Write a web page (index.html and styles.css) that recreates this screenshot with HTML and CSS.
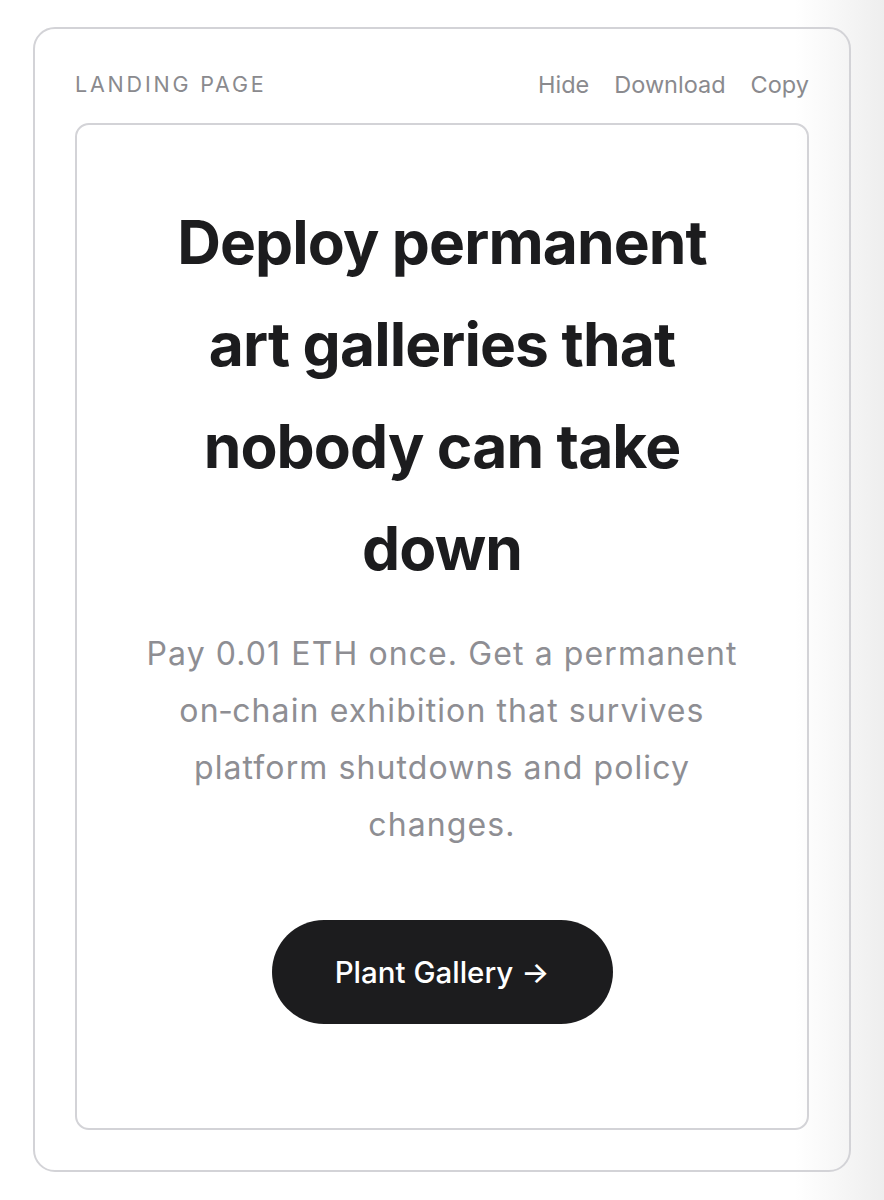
FILE: index.html
```html
<!DOCTYPE html>
<html lang="en">
<head>
<meta charset="utf-8">
<title>Landing Page</title>
<link rel="stylesheet" href="styles.css">
</head>
<body>
<div class="panel">
  <div class="panel-head">
    <span class="panel-title">LANDING PAGE</span>
    <nav class="panel-actions">
      <span class="action">Hide</span>
      <span class="action">Download</span>
      <span class="action">Copy</span>
    </nav>
  </div>
  <section class="preview">
    <h1 class="headline">Deploy permanent art galleries that nobody can take down</h1>
    <p class="lead">Pay 0.01 ETH once. Get a permanent on‑chain exhibition that survives platform shutdowns and policy changes.</p>
    <button class="cta">Plant Gallery →</button>
  </section>
</div>
</body>
</html>
```

FILE: styles.css
```css
html {
  background: linear-gradient(to right, #ffffff 0, #ffffff 795px, #eeeeee 884px);
  min-height: 100%;
}
body {
  margin: 0;
  padding: 27px 33px 28px;
  font-family: Inter, "Noto Sans", sans-serif;
  box-sizing: border-box;
  width: 884px;
}
.panel {
  width: 818px;
  box-sizing: border-box;
  border: 2px solid #d3d3d7;
  border-radius: 22px;
  padding: 36px 40px 40px;
}
.panel-head {
  display: flex;
  justify-content: space-between;
  align-items: center;
  height: 38px;
  margin-bottom: 20px;
}
.panel-title {
  font-size: 21.5px;
  letter-spacing: 2.8px;
  color: #8a8a8e;
}
.panel-actions {
  display: flex;
  gap: 25px;
}
.action {
  font-size: 23.5px;
  color: #8a8a8e;
}
.preview {
  border: 2px solid #d3d3d7;
  border-radius: 14px;
  height: 1007px;
  box-sizing: border-box;
  padding: 66px 40px 0;
  display: flex;
  flex-direction: column;
  align-items: center;
  text-align: center;
}
.headline {
  margin: 0;
  max-width: 580px;
  font-size: 60.5px;
  line-height: 102px;
  font-weight: 700;
  letter-spacing: -0.9px;
  color: #1c1c1e;
}
.lead {
  margin: 26px 0 0;
  max-width: 620px;
  font-size: 32px;
  line-height: 57px;
  letter-spacing: 1.1px;
  color: #8e8e93;
}
.cta {
  margin-top: 67px;
  width: 341px;
  height: 104px;
  border: none;
  border-radius: 52px;
  background: #1c1c1e;
  color: #ffffff;
  font-family: Inter, "Noto Sans", sans-serif;
  font-size: 29.5px;
  font-weight: 500;
}
```
